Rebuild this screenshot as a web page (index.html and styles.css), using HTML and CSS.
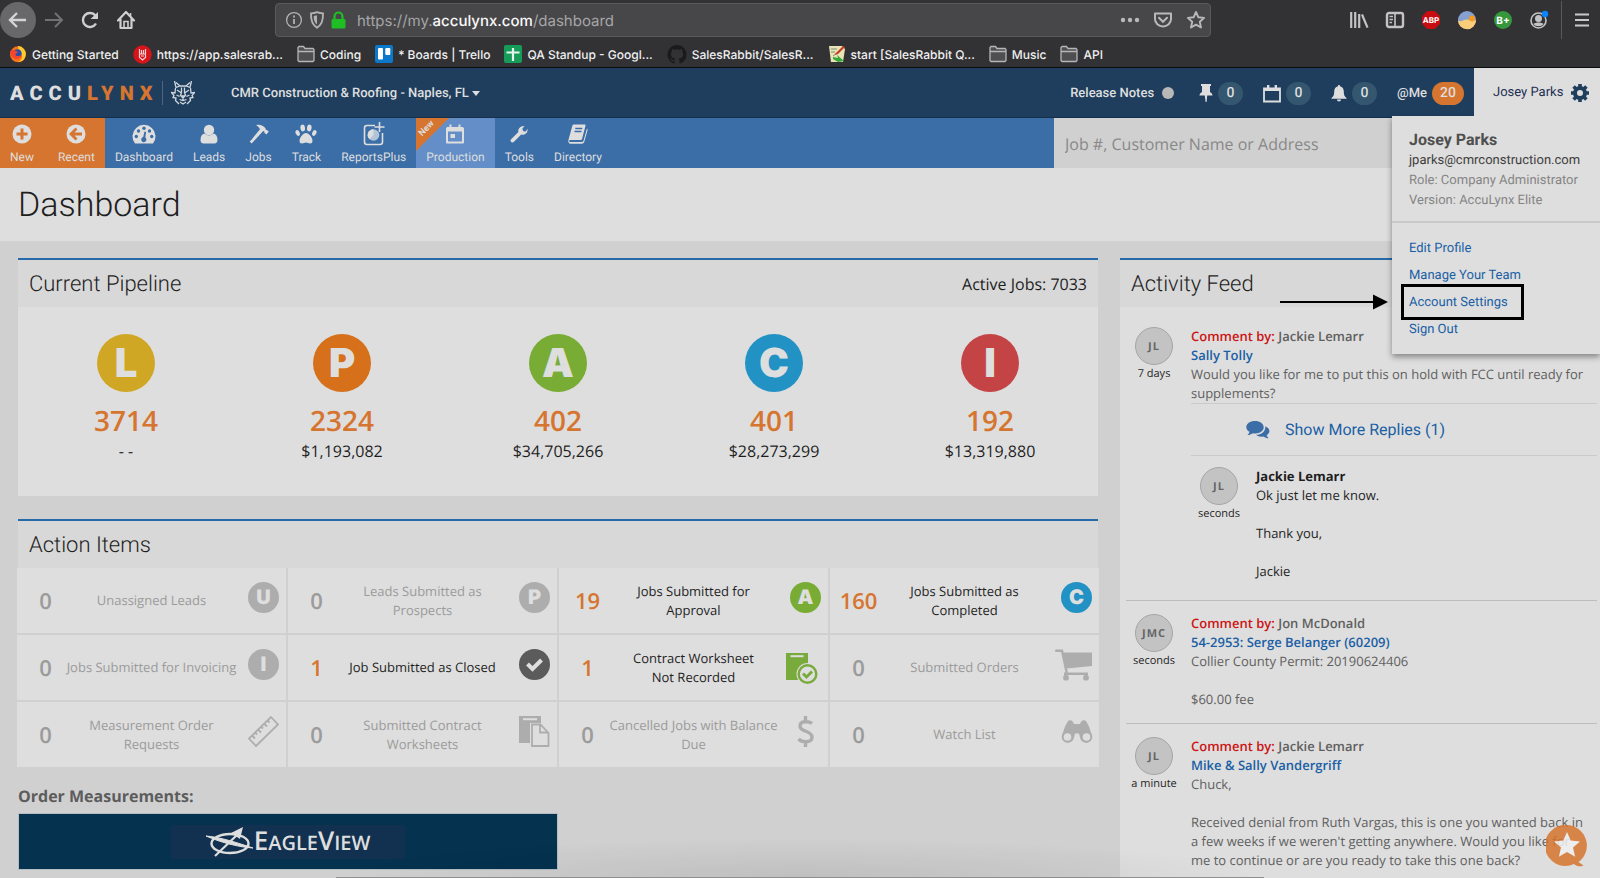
FILE: index.html
```html
<!DOCTYPE html>
<html lang="en">
<head>
    <meta charset="UTF-8">
    <meta name="viewport" content="width=device-width, initial-scale=1.0">
    <title>AccuLynx - Dashboard</title>
    <link rel="stylesheet" href="styles.css">
</head>
<body>
    <!-- Browser bars -->
    <header class="browser">
        <div class="toolbar">
            <div class="tool-nav">
                <button class="back" aria-label="Back"><svg width="20" height="18" viewBox="0 0 20 18"><path d="M18 9H3M9 2L2 9l7 7" fill="none" stroke="#d4d4d6" stroke-width="2.4"/></svg></button>
                <button aria-label="Forward"><svg width="20" height="18" viewBox="0 0 20 18"><path d="M1 9h16M11 2l7 7-7 7" fill="none" stroke="#727275" stroke-width="2"/></svg></button>
                <button aria-label="Reload"><svg width="20" height="18" viewBox="0 0 20 18"><path d="M16 12.5A7 7 0 1 1 15.4 4.6" fill="none" stroke="#cfcfd1" stroke-width="2.4"/><path d="M18 1v7h-7.5z" fill="#cfcfd1"/></svg></button>
                <button aria-label="Home"><svg width="20" height="20" viewBox="0 0 20 20"><path d="M2 10.5L10 2l8 8.500M4.500 9v9h11V9" fill="none" stroke="#cfcfd1" stroke-width="2.200" stroke-linejoin="round" stroke-linecap="round"/><path d="M8 18v-6.500h4V18M14.500 3v3" fill="none" stroke="#cfcfd1" stroke-width="1.600"/></svg></button>
            </div>
            <div class="urlbar">
                <svg width="18" height="18" viewBox="0 0 18 18"><circle cx="9" cy="9" r="7.400" fill="none" stroke="#b1b1b3" stroke-width="1.300"/><path d="M9 8v5M9 4.600v1.800" stroke="#b1b1b3" stroke-width="1.800"/></svg>
                <svg width="16" height="18" viewBox="0 0 16 18"><path d="M8 1.200c2 .9 4 1.200 6 1.200C14.300 9 12.500 14 8 16.600 3.500 14 1.700 9 2 2.400c2 0 4-.3 6-1.200z" fill="none" stroke="#b1b1b3" stroke-width="1.900"/><path d="M8 4.200v9.400C5.600 11.800 4.600 9 4.600 5z" fill="#b1b1b3"/></svg>
                <svg class="lock" width="15" height="18" viewBox="0 0 15 18"><path d="M3.500 8V5.500a4 4 0 0 1 8 0V8" fill="none" stroke="#1fbe24" stroke-width="2.200"/><rect x=".5" y="8" width="14" height="9.500" rx="1.500" fill="#1fbe24"/></svg>
                <span class="url">https://my.<b>acculynx.com</b>/dashboard</span>
                <svg width="20" height="18" viewBox="0 0 20 18" fill="#b9b9bb"><circle cx="3" cy="9" r="2.200"/><circle cx="10" cy="9" r="2.200"/><circle cx="17" cy="9" r="2.200"/></svg>
                <svg width="20" height="18" viewBox="0 0 20 18"><path d="M2 2.500h16V8a8 7.500 0 0 1-16 0z" fill="none" stroke="#b9b9bb" stroke-width="2" stroke-linejoin="round"/><path d="M6 6.800l4 4 4-4" fill="none" stroke="#b9b9bb" stroke-width="2" stroke-linecap="round"/></svg>
                <svg width="20" height="20" viewBox="0 0 20 20"><path d="M10 2l2.400 5.300 5.700.6-4.300 3.900 1.200 5.700-5-2.900-5 2.900 1.200-5.700L1.900 7.900l5.700-.6z" fill="none" stroke="#b9b9bb" stroke-width="1.900" stroke-linejoin="round"/></svg>
            </div>
            <div class="tool-ext">
                <button aria-label="Library"><svg width="20" height="18" viewBox="0 0 20 18" stroke="#c3c3c5" stroke-width="2.200"><path d="M2.200 1v16M6.200 1v16M10.200 3v14M13 3.500l5.500 13.200"/></svg></button>
                <button aria-label="Sidebars"><svg width="20" height="18" viewBox="0 0 20 18"><rect x="2" y="2" width="16" height="14" rx="2" fill="none" stroke="#c3c3c5" stroke-width="2.400"/><path d="M10 2v14M4.500 5.500H8M4.500 8.500H8M4.500 11.500H7" stroke="#c3c3c5" stroke-width="1.600"/></svg></button>
                <button aria-label="Adblock Plus"><svg width="20" height="20" viewBox="0 0 20 20"><path d="M6.200 1h7.600L19 6.200v7.600L13.800 19H6.200L1 13.800V6.200z" fill="#c70d12"/><text class="abp" x="10" y="13" text-anchor="middle">ABP</text></svg></button>
                <button aria-label="Weather"><svg width="20" height="20" viewBox="0 0 20 20"><circle cx="10" cy="10" r="9" fill="#86a0cf"/><path d="M1 10.500c4 2.400 6-2 10-.8 3 .8 5 1.300 8 .3a9 9 0 0 1-18 .5z" fill="#fbce79"/><circle cx="15" cy="8.500" r="3" fill="#f79a20"/></svg></button>
                <button aria-label="B+"><svg width="20" height="20" viewBox="0 0 20 20"><circle cx="10" cy="10" r="9" fill="#36973c"/><text class="bplus" x="10" y="13.500" text-anchor="middle">B+</text></svg></button>
                <button aria-label="Account"><svg width="20" height="20" viewBox="0 0 20 20"><circle cx="9.500" cy="10.500" r="7.500" fill="none" stroke="#c3c3c5" stroke-width="1.600"/><circle cx="9.500" cy="8.500" r="3.500" fill="#c3c3c5"/><path d="M4.500 14c2-2 8-2 10 0-2 3-8 3-10 0z" fill="#c3c3c5"/><circle cx="16" cy="4" r="3.200" fill="#0a84ff"/></svg></button>
                <button class="menu" aria-label="Menu"><svg width="16" height="16" viewBox="0 0 16 16"><path d="M1 2.500h14M1 8h14M1 13.500h14" stroke="#c9c9cb" stroke-width="2.200"/></svg></button>
            </div>
        </div>
        <nav class="bookmarks">
            <a href="#"><svg width="18" height="18" viewBox="0 0 18 18"><circle cx="9" cy="9.300" r="8" fill="#f9701b"/><path d="M9 1a8 8 0 0 1 7.500 10A8 8 0 0 1 9 17c4-2 5-5 3-9-1-2-3-3-3-7z" fill="#ffcb2e"/><circle cx="8.500" cy="8.500" r="4.200" fill="#2b4fa8"/><path d="M1.300 6C3 4 5 4.500 6.500 6c2 0 3 1 1.500 2-2 .5-2 2.500 0 3 2 .4 3-.5 4.500-.5-1 3-5 4.500-8 2.500C2 11 1 9 1.300 6z" fill="#f5452c"/></svg>Getting Started</a>
            <a href="#"><svg width="19" height="19" viewBox="0 0 19 19"><circle cx="9.500" cy="9.500" r="9.200" fill="#d8141b"/><path d="M6.500 4v5M12.500 4v5M8.500 5v4M10.500 5v4M6.500 9v3.500l3 2.500 3-2.500V9zM8 11h3" fill="none" stroke="#f3d3d3" stroke-width="1.200"/></svg>https://app.salesrab...</a>
            <a href="#"><svg width="18" height="18" viewBox="0 0 18 18"><path d="M1 15.500V2.500l1-1h4.500l1.500 2h8l1 1v11l-1 1H2zM1 6.500h16" fill="#4f4f51" stroke="#b6b6b8" stroke-width="1.300"/></svg>Coding</a>
            <a href="#"><svg width="18" height="18" viewBox="0 0 18 18"><rect width="18" height="18" rx="2" fill="#0b78cc"/><rect x="3" y="3" width="5" height="11.500" rx="1" fill="#fff"/><rect x="10.300" y="3" width="5" height="7" rx="1" fill="#fff"/></svg>* Boards | Trello</a>
            <a href="#"><svg width="18" height="18" viewBox="0 0 18 18"><rect width="18" height="18" rx="2" fill="#159c58"/><path d="M9 3v13M2.500 7.500h13" stroke="#e6f4ec" stroke-width="2.200"/></svg>QA Standup - Googl...</a>
            <a href="#"><svg width="20" height="19" viewBox="0 0 16 16"><path fill="#1b1b1d" d="M8 0C3.580 0 0 3.580 0 8c0 3.540 2.290 6.530 5.470 7.590.4.070.55-.17.55-.38 0-.19-.01-.82-.01-1.490-2.010.37-2.530-.49-2.690-.94-.09-.23-.48-.94-.82-1.130-.28-.15-.68-.52-.01-.53.63-.01 1.080.58 1.230.82.72 1.210 1.870.87 2.330.66.070-.52.280-.87.510-1.070-1.780-.2-3.640-.89-3.640-3.950 0-.87.310-1.590.82-2.150-.08-.2-.36-1.020.08-2.120 0 0 .67-.21 2.200.82.640-.18 1.320-.27 2-.27s1.360.09 2 .27c1.530-1.040 2.200-.82 2.200-.82.440 1.100.16 1.920.08 2.120.51.560.82 1.270.82 2.150 0 3.070-1.870 3.750-3.650 3.950.29.250.54.730.54 1.480 0 1.070-.01 1.930-.01 2.200 0 .21.150.46.550.38A8 8 0 0 0 16 8c0-4.420-3.580-8-8-8z"/></svg>SalesRabbit/SalesR...</a>
            <a href="#"><svg width="18" height="18" viewBox="0 0 18 18"><path d="M1 1h13l3 3-2 13H3z" fill="#e9e3b8"/><path d="M3 4h6M3 7h4M5 11l4-3" stroke="#7d8f76"/><path d="M5 12l5 1-1-3 7 6-6 1-5-3z" fill="#35a838"/><path d="M7 9l8-8 2 1-7 7-3 1z" fill="#c93a24"/></svg>start [SalesRabbit Q...</a>
            <a href="#"><svg width="18" height="18" viewBox="0 0 18 18"><path d="M1 15.500V2.500l1-1h4.500l1.500 2h8l1 1v11l-1 1H2zM1 6.500h16" fill="#4f4f51" stroke="#b6b6b8" stroke-width="1.300"/></svg>Music</a>
            <a href="#"><svg width="18" height="18" viewBox="0 0 18 18"><path d="M1 15.500V2.500l1-1h4.500l1.500 2h8l1 1v11l-1 1H2zM1 6.500h16" fill="#4f4f51" stroke="#b6b6b8" stroke-width="1.300"/></svg>API</a>
        </nav>
    </header>

    <!-- App header -->
    <div class="topbar">
        <a class="logo" href="#">
            <span class="wordmark">ACCU<span>LYNX</span></span>
            <svg width="24" height="24" viewBox="0 0 24 24" fill="none" stroke="#d0d6dc" stroke-width="1.300"><path d="M3.500 0l1.500 6.500 4-1.500h6l4 1.500L20.500 0M5 1.500L9 5M19 1.500L15 5M4.500 7L4 12l-3.500-.5L3 14.500l-1 2 3 .5-.5 2.500L8 23M19.500 7l.5 5 3.500-.5L21 14.500l1 2-3 .5.5 2.500L16 23M6 9l4.500 3M18 9l-4.500 3M10.500 6.500v5l-1 3M13.500 6.500v5l1 3M10 15h4l-2 2zM12 17v2M8.500 18.500l3.500 1 3.500-1M9 21l3 2 3-2M5.500 14l3 1.500M18.500 14l-3 1.500"/></svg>
        </a>
        <button class="company">CMR Construction &amp; Roofing - Naples, FL<i class="caret"></i></button>
        <div class="status">
            <a class="release" href="#">Release Notes<i class="dot"></i></a>
            <a href="#" aria-label="Pinned"><svg width="14" height="20" viewBox="0 0 14 20" fill="#dedede"><path d="M2 1h10v2h-1v6c1.500.8 2.500 2 2.500 3.500h-5.300L7.600 19h-1L5.800 12.500H.5C.5 11 1.500 9.800 3 9V3H2z"/></svg><span class="badge">0</span></a>
            <a href="#" aria-label="Calendar"><svg width="18" height="19" viewBox="0 0 18 19"><path d="M1 4.500h16v13H1z" fill="none" stroke="#dedede" stroke-width="1.800"/><path d="M1 4h16v3H1zM4 1h2.400v4H4zM11.600 1H14v4h-2.400z" fill="#dedede"/></svg><span class="badge">0</span></a>
            <a href="#" aria-label="Alerts"><svg width="16" height="18" viewBox="0 0 16 18" fill="#dedede"><path d="M8 1c.8 0 1 .5 1 1.200 2.500.7 3.800 2.500 3.800 5.300 0 3.500.6 4.800 2.700 6.500v.8H.5V14C2.600 12.300 3.200 11 3.200 7.500 3.200 4.700 4.500 2.900 7 2.200 7 1.500 7.200 1 8 1zM6 15.500h4c0 1.200-.8 2-2 2s-2-.8-2-2z"/></svg><span class="badge">0</span></a>
            <a href="#">@Me<span class="badge hot">20</span></a>
        </div>
        <div class="user">
            <button class="user-button">Josey Parks
                <svg width="18" height="18" viewBox="0 0 18 18"><circle cx="9" cy="9" r="5" fill="none" stroke="#1f3e5e" stroke-width="4"/><path d="M9 0v4M9 14v4M0 9h4M14 9h4M2.600 2.600l3 3M12.400 12.400l3 3M2.600 15.400l3-3M12.400 5.600l3-3" stroke="#1f3e5e" stroke-width="3.600"/></svg>
            </button>
            <div class="user-menu">
                <div class="user-info">
                    <strong>Josey Parks</strong>
                    <span class="email">jparks@cmrconstruction.com</span>
                    <span>Role: Company Administrator</span>
                    <span>Version: AccuLynx Elite</span>
                </div>
                <div class="user-links">
                    <a href="#">Edit Profile</a>
                    <a href="#">Manage Your Team</a>
                    <a class="marked" href="#">Account Settings<svg class="arrow" width="108" height="16" viewBox="0 0 108 16"><path d="M0 8h96" stroke="#000" stroke-width="2"/><path d="M93 .5L108 8l-15 7.500z"/></svg></a>
                    <a href="#">Sign Out</a>
                </div>
            </div>
        </div>
    </div>

    <div class="mainnav">
        <nav class="items">
            <div class="quick">
                <a href="#"><svg width="20" height="20" viewBox="0 0 20 20"><circle cx="10" cy="10" r="9.500" fill="#dedede"/><path d="M10 4.500v11M4.500 10h11" stroke="#d6752f" stroke-width="3"/></svg>New</a>
                <a href="#"><svg width="20" height="20" viewBox="0 0 20 20"><circle cx="10" cy="10" r="9.500" fill="#dedede"/><path d="M16 10H6M10.500 4.500L5 10l5.500 5.500" fill="none" stroke="#d6752f" stroke-width="2.800"/></svg>Recent</a>
            </div>
            <a href="#"><svg width="24" height="20" viewBox="0 0 24 20"><path d="M3 19.500A11.500 11.500 0 1 1 21 19.500z" fill="#dedede"/><g fill="#3b6da6"><circle cx="4.300" cy="12.500" r="1.700"/><circle cx="6.500" cy="7" r="1.700"/><circle cx="12" cy="4.200" r="1.700"/><circle cx="17.500" cy="7" r="1.700"/><circle cx="19.700" cy="12.500" r="1.700"/><path d="M12.500 7.500l1.600.4-.8 5.600a2.600 2.600 0 1 1-2.100-.4z"/></g></svg>Dashboard</a>
            <a href="#"><svg width="18" height="20" viewBox="0 0 18 20" fill="#dedede"><circle cx="9" cy="6" r="5.200"/><path d="M4.500 9.500c3 2.600 6 2.600 9 0 2.500.4 4 3 4 6.500 0 2-1.200 3.500-3 3.500h-11c-1.800 0-3-1.500-3-3.500 0-3.500 1.500-6.100 4-6.500z"/></svg>Leads</a>
            <a href="#"><svg width="20" height="20" viewBox="0 0 20 20" fill="#dedede"><path d="M7 1c4-1 7 .2 9.500 3.200l.2 1.600 1.300.2 1.800 1.800-2.600 2.700-1.900-1.900.1-1.100-1.200-.6L4.500 17.500 2.600 19.500.7 17.600l2-2.200L11 5.200C10 3.500 9 2.200 7 1z"/></svg>Jobs</a>
            <a href="#"><svg width="22" height="20" viewBox="0 0 22 20" fill="#dedede"><ellipse cx="7.700" cy="4" rx="2.300" ry="3.400" transform="rotate(-8 7.700 4)"/><ellipse cx="14.300" cy="4" rx="2.300" ry="3.400" transform="rotate(8 14.300 4)"/><ellipse cx="2.700" cy="9" rx="2" ry="3" transform="rotate(-25 2.700 9)"/><ellipse cx="19.300" cy="9" rx="2" ry="3" transform="rotate(25 19.300 9)"/><path d="M11 9c3 0 6.500 4.700 6.500 8 0 1.700-1 2.500-2.500 2.500-1.700 0-2.600-1-4-1s-2.300 1-4 1c-1.500 0-2.500-.8-2.500-2.500C4.500 13.700 8 9 11 9z"/></svg>Track</a>
            <a href="#"><svg class="reports" width="22" height="24" viewBox="0 0 22 24"><path d="M12 3.500H4A2.500 2.500 0 0 0 1.500 6v14A2.500 2.500 0 0 0 4 22.500h13a2.500 2.500 0 0 0 2.500-2.500v-9" fill="none" stroke="#dedede" stroke-width="1.600"/><circle cx="10.500" cy="13" r="5.800" fill="#b3c3da"/><path d="M10.500 13V7.200a5.800 5.800 0 0 0-4 10z" fill="#dedede"/><path d="M16.500 0v10M11.500 5h10" stroke="#dedede" stroke-width="1.600"/></svg>ReportsPlus</a>
            <a class="production" href="#"><span class="ribbon">New</span><svg width="18" height="20" viewBox="0 0 18 20"><path d="M1 4.500h16v14H1z" fill="none" stroke="#dedede" stroke-width="2" stroke-linejoin="round"/><path d="M1 3h16v4.500H1zM3.500.5h2V4h-2zM12.500.5h2V4h-2zM4.500 10h4.500v4H4.500z" fill="#dedede"/></svg>Production</a>
            <a href="#"><svg width="18" height="20" viewBox="0 0 18 20"><path d="M12.500 2.200a4.600 4.600 0 0 1 2-.2l-2.200 2.800 1 2.400 2.500.3 1.700-2.800c.6 2.800-1 5.700-4 6-.9.100-1.600 0-2.300-.3L4 17.800a1.900 1.900 0 0 1-2.900-2.600L8.400 8C7.600 5.300 9.500 2.800 12.500 2.200z" fill="#dedede"/></svg>Tools</a>
            <a href="#"><svg width="20" height="20" viewBox="0 0 20 20"><path d="M6 .5h10.500c.8 0 1.200.5 1 1.200L14 15c-.2.600-.6 1-1.300 1H2.500C.8 16 .5 17.500 2 18h11.500c1 0 1.700-.4 2-1.300L19 4.500c.6.400.8 1 .6 1.600L16.300 17.700c-.4 1.300-1.300 2-2.600 2H2.500C.7 19.700 0 18 .4 16L4.300 2C4.500 1 5 .5 6 .5z" fill="#dedede"/><path d="M7.300 4.500h7M6.500 7.500h7" stroke="#3b6da6" stroke-width="1.300"/></svg>Directory</a>
        </nav>
        <input class="search" type="search" aria-label="Search jobs" placeholder="Job #, Customer Name or Address">
    </div>

    <div class="page-head"><h1>Dashboard</h1></div>

    <main class="content">
        <div class="left">
            <section class="panel">
                <div class="panel-head"><h2>Current Pipeline</h2><span>Active Jobs: 7033</span></div>
                <div class="pipeline">
                    <a class="stage" href="#"><i class="circle lead">L</i><b>3714</b><span>- -</span></a>
                    <a class="stage" href="#"><i class="circle prospect">P</i><b>2324</b><span>$1,193,082</span></a>
                    <a class="stage" href="#"><i class="circle approved">A</i><b>402</b><span>$34,705,266</span></a>
                    <a class="stage" href="#"><i class="circle completed">C</i><b>401</b><span>$28,273,299</span></a>
                    <a class="stage" href="#"><i class="circle invoiced">I</i><b>192</b><span>$13,319,880</span></a>
                </div>
            </section>

            <section class="panel">
                <div class="panel-head"><h2>Action Items</h2></div>
                <div class="tiles">
                    <a class="tile" href="#"><b>0</b><span>Unassigned Leads</span><i class="circle small">U</i></a>
                    <a class="tile" href="#"><b>0</b><span>Leads Submitted as<br>Prospects</span><i class="circle small">P</i></a>
                    <a class="tile active" href="#"><b>19</b><span>Jobs Submitted for<br>Approval</span><i class="circle small approved">A</i></a>
                    <a class="tile active" href="#"><b>160</b><span>Jobs Submitted as<br>Completed</span><i class="circle small completed">C</i></a>
                    <a class="tile" href="#"><b>0</b><span>Jobs Submitted for Invoicing</span><i class="circle small">I</i></a>
                    <a class="tile active" href="#"><b>1</b><span>Job Submitted as Closed</span><svg width="31" height="31" viewBox="0 0 31 31"><circle cx="15.500" cy="15.500" r="15.500" fill="#5b5b5b"/><path d="M8.500 15l5 5 9-9" fill="none" stroke="#dedede" stroke-width="4"/></svg></a>
                    <a class="tile active" href="#"><b>1</b><span>Contract Worksheet<br>Not Recorded</span><svg class="worksheet" width="32" height="31" viewBox="0 0 32 31"><path d="M0 0h22v27H0z" fill="#79aa3c"/><path d="M4.500 3.200h13" stroke="#dedede" stroke-width="2"/><circle cx="21.500" cy="21" r="11" fill="#dedede"/><circle cx="21.500" cy="21" r="8.800" fill="none" stroke="#79aa3c" stroke-width="2.400"/><path d="M17 20.500l3.500 3.500 5.500-5.500" fill="none" stroke="#79aa3c" stroke-width="3"/></svg></a>
                    <a class="tile" href="#"><b>0</b><span>Submitted Orders</span><svg class="cart" width="37" height="32" viewBox="0 0 37 32" fill="#adadad"><path d="M1.200 1.700H7L12 25" fill="none" stroke="#adadad" stroke-width="2.400" stroke-linecap="round"/><path d="M7.500 3.500H37V17L11.500 19.500zM9 23.500h24v2.400H9z"/><circle cx="11" cy="28.700" r="2.900"/><circle cx="31" cy="28.700" r="2.900"/></svg></a>
                    <a class="tile" href="#"><b>0</b><span>Measurement Order<br>Requests</span><svg width="31" height="31" viewBox="0 0 31 31" fill="none" stroke="#adadad" stroke-width="1.800"><path d="M23 1l7 7.500L8 30 1 22.500zM4 19.500l3 3M7 16.500l2 2M10 13.500l3 3M13 10.500l2 2M16 7.500l3 3M19.500 4.500l2 2"/></svg></a>
                    <a class="tile" href="#"><b>0</b><span>Submitted Contract<br>Worksheets</span><svg width="31" height="31" viewBox="0 0 31 31"><path d="M0 0h22v27H0z" fill="#adadad"/><path d="M4 3.200h14" stroke="#dedede" stroke-width="2"/><path d="M11 7h12l8 9v15H11z" fill="#dedede"/><path d="M13 8.500h8.500l8 8.500v13H13zM21 8.500v8h8" fill="none" stroke="#adadad" stroke-width="1.800"/></svg></a>
                    <a class="tile" href="#"><b>0</b><span>Cancelled Jobs with Balance<br>Due</span><svg width="17" height="31" viewBox="0 0 17 31"><path d="M15 7.500C12 5 3 4.500 3 10c0 6.500 12 4 12 11 0 6-9.500 6-13.500 2M8.500 0v5.500M8.500 25.500V31" fill="none" stroke="#adadad" stroke-width="3.400"/></svg></a>
                    <a class="tile" href="#"><b>0</b><span>Watch List</span><svg width="32" height="31" viewBox="0 0 32 31"><path d="M7 5c1.500-1.500 4-1 5 1l1 2h6l1-2c1-2 3.500-2.500 5-1l3 5.500 3 9a6 6 0 0 1-12 2l-1-4h-4l-1 4a6 6 0 0 1-12-2l3-9z" fill="#adadad"/><circle cx="6.500" cy="21" r="4.800" fill="#dedede" stroke="#adadad" stroke-width="2"/><circle cx="25.500" cy="21" r="4.800" fill="#dedede" stroke="#adadad" stroke-width="2"/></svg></a>
                </div>
            </section>

            <h3>Order Measurements:</h3>
            <a class="eagleview" href="#">
                <span class="ev-logo">
                    <svg width="48" height="30" viewBox="0 0 48 30" fill="none" stroke="#dedede"><ellipse cx="24" cy="16.500" rx="18.500" ry="9.500" stroke-width="2.400"/><path d="M0 9c14 1 32 7 47 12-16-1-33-6-47-12z" fill="#dedede" stroke-width="1"/><path d="M9 29L31 8" stroke-width="2.200"/><path d="M25 6L37 0l-3 12z" fill="#dedede" stroke="none"/></svg>
                    <span class="ev-name"><b>E</b>AGLE<b>V</b>IEW</span>
                </span>
            </a>
        </div>

        <section class="panel feed">
            <div class="panel-head"><h2>Activity Feed</h2></div>
            <article class="entry first">
                <div class="who"><i class="avatar">JL</i>7 days</div>
                <div class="text">
                    <h4><em>Comment by:</em> Jackie Lemarr</h4>
                    <a class="job" href="#">Sally Tolly</a>
                    <p>Would you like for me to put this on hold with FCC until ready for supplements?</p>
                    <button class="more"><svg width="24" height="19" viewBox="0 0 24 19" fill="#3b6da6"><path d="M9 1c5 0 8.700 2.700 8.700 6.200S14 13.400 9 13.400c-.8 0-1.500-.1-2.200-.2C5.300 14.400 3.500 15 1.500 15c1-1 1.800-2 2-3.200C1.500 10.700.3 9 .3 7.200.3 3.700 4 1 9 1z"/><path d="M19.300 6.200c2.400 1 4.100 2.700 4.100 4.900 0 1.700-1 3.200-2.700 4.200.2 1.100 1 2 2 3-2 0-3.700-.7-5.200-1.800-3 .5-5.700-.1-7.500-1.700 5.500-.2 9.800-3.500 9.300-8.600z"/></svg>Show More Replies (1)</button>
                    <div class="reply">
                        <div class="who"><i class="avatar">JL</i>seconds</div>
                        <div class="text">
                            <h4>Jackie Lemarr</h4>
                            <p>Ok just let me know.<br><br>Thank you,<br><br>Jackie</p>
                        </div>
                    </div>
                </div>
            </article>
            <article class="entry">
                <div class="who"><i class="avatar">JMC</i>seconds</div>
                <div class="text">
                    <h4><em>Comment by:</em> Jon McDonald</h4>
                    <a class="job" href="#">54-2953: Serge Belanger (60209)</a>
                    <p>Collier County Permit: 20190624406<br><br>$60.00 fee</p>
                </div>
            </article>
            <article class="entry">
                <div class="who"><i class="avatar">JL</i>a minute</div>
                <div class="text">
                    <h4><em>Comment by:</em> Jackie Lemarr</h4>
                    <a class="job" href="#">Mike &amp; Sally Vandergriff</a>
                    <p>Chuck,<br><br>Received denial from Ruth Vargas, this is one you wanted back in a few weeks if we weren't getting anywhere. Would you like for me to continue or are you ready to take this one back?</p>
                </div>
            </article>
        </section>
    </main>

    <button class="chat" aria-label="Feedback"><svg width="42" height="43" viewBox="0 0 42 43"><path d="M21 1a20.500 20.500 0 0 1 11.500 37l5 3.500c-3 1.500-7 1-9.500-1.500A20.500 20.500 0 1 1 21 1z" fill="#d6752f"/><path d="M21 8l3.700 8.600 9.300.8-7 6.200 2.100 9.200-8.100-4.900-8.100 4.900 2.100-9.200-7-6.200 9.300-.8z" fill="#f0f0f0"/></svg></button>
    <div class="bottom-shade"></div>
</body>
</html>
```
FILE: styles.css
```css
*, *::before {
    box-sizing: border-box;
}
body {
    margin: 0;
    height: 100vh;
    display: flex;
    flex-direction: column;
    overflow: hidden;
    background: #d0d0d0;
    font-family: "Open Sans", "Noto Sans", sans-serif;
    font-size: 13px;
    line-height: 19px;
    text-rendering: geometricPrecision;
    color: #1e1e1e;
}
a {
    color: inherit;
    text-decoration: none;
}
button {
    padding: 0;
    border: 0;
    background: none;
    font: inherit;
    text-rendering: inherit;
    color: inherit;
    cursor: pointer;
}
i {
    font-style: normal;
}
svg {
    display: block;
    flex: none;
}
h1, h2, h3, h4, p {
    margin: 0;
}

/* Browser bars */
.browser {
    flex: none;
    background: #323234;
    border-bottom: 1px solid #0c0c0d;
    font-family: Inter, "Liberation Sans", sans-serif;
}
.toolbar {
    display: flex;
    align-items: center;
    height: 40px;
    padding-right: 10px;
}
.tool-nav, .tool-ext {
    display: flex;
    align-items: center;
    gap: 16px;
}
.tool-nav {
    width: 275px;
}
.tool-nav .back {
    display: flex;
    justify-content: center;
    align-items: center;
    width: 36px;
    height: 36px;
    margin-right: -8px;
    border-radius: 50%;
    background: #68686a;
}
.urlbar {
    flex: 1;
    display: flex;
    align-items: center;
    gap: 13px;
    height: 34px;
    padding: 0 4px 0 9px;
    border: 1px solid #5a5a5c;
    border-radius: 4px;
    background: #474749;
}
.urlbar svg + svg {
    margin-left: -7px;
}
.urlbar .url ~ svg {
    margin-left: 0;
}
.url {
    flex: 1;
    margin-left: -2px;
    font-size: 15px;
    color: #a5a5a7;
}
.url b {
    font-weight: 500;
    color: #f9f9fa;
}
.tool-ext {
    padding-left: 138px;
}
.tool-ext .menu {
    display: flex;
    align-items: center;
    height: 38px;
    padding-left: 12px;
    border-left: 1px solid #5a5a5c;
    margin-left: -4px;
}
.abp {
    font: bold 8px Inter, sans-serif;
    fill: #fff;
}
.bplus {
    font: bold 10px Inter, sans-serif;
    fill: #fff;
}
.bookmarks {
    display: flex;
    align-items: center;
    gap: 14px;
    height: 27px;
    padding: 1px 0 0 9px;
    font-size: 12px;
    font-weight: 500;
    color: #f0f0f1;
}
.bookmarks a {
    display: flex;
    align-items: center;
    gap: 5px;
}

/* Top bar */
.topbar {
    flex: none;
    display: flex;
    align-items: center;
    height: 50px;
    background: #1f3e5e;
    border-bottom: 1px solid #16304c;
    font-family: Roboto, sans-serif;
    font-weight: 500;
    color: #dedede;
}
.logo {
    display: flex;
    align-items: center;
    width: 231px;
    padding-left: 10px;
}
.wordmark {
    padding-right: 3px;
    margin-right: 8px;
    border-right: 1px solid #4f6780;
    font-size: 20px;
    font-weight: 900;
    line-height: 24px;
    letter-spacing: 6px;
}
.wordmark span {
    color: #d6752f;
}
.company {
    display: flex;
    align-items: center;
    gap: 3px;
    padding-top: 2px;
}
.caret {
    border: 4px solid transparent;
    border-top: 5px solid #dedede;
    border-bottom: 0;
}
.status {
    flex: 1;
    display: flex;
    justify-content: flex-end;
    align-items: center;
    gap: 20px;
    padding: 1px 10px 0 0;
}
.status a {
    display: flex;
    align-items: center;
    gap: 5px;
}
.status .release {
    gap: 8px;
    margin-right: 5px;
}
.dot {
    width: 12px;
    height: 12px;
    border-radius: 50%;
    background: #b8b8b8;
}
.badge {
    min-width: 25px;
    padding: 0 8px;
    border-radius: 12px;
    background: #34566f;
    font-size: 14px;
    line-height: 23px;
    text-align: center;
}
.badge.hot {
    background: #d6752f;
}
.user {
    position: relative;
    align-self: stretch;
}
.user-button {
    position: relative;
    z-index: 3;
    display: flex;
    align-items: center;
    gap: 8px;
    width: 126px;
    height: 49px;
    padding-left: 19px;
    background: #dedede;
    font-weight: 400;
    color: #1c2f52;
}
.user-menu {
    position: absolute;
    top: 48px;
    right: 0;
    z-index: 2;
    width: 208px;
    background: #dedede;
    box-shadow: 0 3px 6px rgba(0, 0, 0, 0.4);
    font-weight: 400;
    line-height: 20px;
    color: #858585;
}
.user-info {
    display: flex;
    flex-direction: column;
    padding: 14px 0 10px 17px;
    border-bottom: 2px solid #c9c9c9;
}
.user-info strong {
    margin-bottom: 1px;
    font-size: 16px;
    color: #4f4f4f;
}
.user-info .email {
    color: #3d3d3d;
}
.user-links {
    display: flex;
    flex-direction: column;
    padding: 12px 0 11px 17px;
    line-height: 27px;
    color: #1a5fa5;
}
.marked {
    position: relative;
}
/* Frame drawn round the marked link */
.marked::before {
    content: "";
    position: absolute;
    left: -8px;
    top: -5px;
    width: 123px;
    height: 36px;
    border: 3px solid #000;
}
.arrow {
    position: absolute;
    right: 212px;
    top: 5px;
}

/* Blue navigation */
.mainnav {
    flex: none;
    display: flex;
    height: 50px;
    background: #3b6da6;
    font-family: Roboto, sans-serif;
    font-size: 12px;
    color: #dedede;
}
.items {
    flex: 1;
    display: flex;
}
.items a {
    display: flex;
    flex-direction: column;
    align-items: center;
    gap: 6px;
    padding: 6px 10px 0;
    line-height: 14px;
}
.quick {
    display: flex;
    gap: 4px;
    background: #d6752f;
}
.reports {
    margin: -2px 0;
}
.items .production {
    position: relative;
    overflow: hidden;
    background: #648ec7;
}
/* Corner ribbon, a strip laid across the corner */
.ribbon {
    position: absolute;
    left: -22px;
    top: -4px;
    width: 60px;
    height: 24px;
    background: #d6752f;
    font-size: 9px;
    font-weight: 700;
    line-height: 32px;
    text-align: center;
    transform: rotate(-45deg);
}
.search {
    width: 546px;
    padding: 1px 11px 0;
    border: 0;
    border-radius: 0;
    background: #d0d0d0;
    font-family: "Open Sans", "Noto Sans", sans-serif;
    font-size: 16px;
    text-rendering: inherit;
}
.search::placeholder {
    color: #888;
}

.page-head {
    flex: none;
    height: 73px;
    padding: 16px 18px;
    background: #dedede;
}
h1 {
    font-family: Roboto, sans-serif;
    font-size: 34px;
    font-weight: 300;
    line-height: 42px;
}

/* Dashboard */
.content {
    flex: 1;
    min-height: 0;
    display: grid;
    grid-template-columns: 9fr 4fr;
    gap: 22px;
    padding: 17px 0 0 18px;
}
.left {
    min-width: 0;
}
.panel {
    border-top: 2px solid #276aa9;
    background: #dedede;
}
.panel-head {
    display: flex;
    justify-content: space-between;
    align-items: center;
    height: 47px;
    padding: 1px 11px 0;
    background: #d8d8d8;
    font-size: 16px;
}
h2 {
    font-family: Roboto, sans-serif;
    font-size: 22px;
    font-weight: 300;
}
.pipeline {
    display: grid;
    grid-template-columns: repeat(5, 1fr);
    margin-bottom: 23px;
    padding: 27px 0 33px;
}
.stage {
    display: flex;
    flex-direction: column;
    align-items: center;
    font-size: 16px;
    line-height: 24px;
}
.stage b {
    margin-top: 11px;
    font-size: 28px;
    font-weight: 600;
    line-height: 36px;
    color: #d6752f;
}
.circle {
    width: 58px;
    border-radius: 50%;
    font-family: Inter, sans-serif;
    font-size: 40px;
    font-weight: 900;
    line-height: 58px;
    text-align: center;
    color: #dedede;
    background: #adadad;
}
.circle.small {
    width: 31px;
    font-size: 20px;
    line-height: 31px;
}
.circle.lead {
    background: #d0a724;
}
.circle.prospect {
    background: #d6701a;
}
.circle.approved {
    background: #79ac34;
}
.circle.completed {
    background: #2292c5;
}
.circle.invoiced {
    background: #c44345;
}
.tiles {
    display: grid;
    grid-template-columns: repeat(4, minmax(0, 1fr));
    gap: 2px;
    margin: 0 -1px;
    background: #d0d0d0;
}
.tile {
    display: grid;
    grid-template-columns: 45px minmax(0, 1fr) 45px;
    align-items: center;
    justify-items: center;
    height: 65px;
    color: #9b9b9b;
    background: #dedede;
    text-align: center;
}
.tile b {
    padding: 2px 0 0 12px;
    font-size: 22px;
    font-weight: 600;
}
.tile span {
    white-space: nowrap;
}
.tile .circle, .tile svg {
    align-self: start;
    margin-top: 14px;
}
.tile .worksheet {
    margin: 18px 8px 0 0;
}
.tile .cart {
    justify-self: end;
    margin-right: 7px;
}
.tile.active {
    color: #1e1e1e;
}
.tile.active b {
    color: #d6752f;
}
h3 {
    margin: 19px 0 7px;
    font-size: 16px;
    line-height: 20px;
    color: #5c5c5c;
}
.eagleview {
    display: flex;
    justify-content: center;
    align-items: center;
    width: 50%;
    height: 57px;
    border: 1px solid #b5bcc2;
    background: #04324f;
    color: #dedede;
}
.ev-logo {
    display: flex;
    justify-content: center;
    align-items: center;
    width: 234px;
    height: 34px;
    background: #12304f;
}
.ev-name {
    font-size: 20px;
    font-weight: 600;
    line-height: 30px;
}
.ev-name b {
    font-size: 26px;
    font-weight: 600;
}

/* Activity feed */
.feed {
    min-width: 0;
    overflow: hidden;
}
.entry {
    display: flex;
    margin: 0 3px 0 6px;
    padding: 13px 0 14px;
    border-top: 1px solid #bdbdbd;
    color: #606060;
}
.entry.first {
    padding: 20px 0 19px;
    border-top: 0;
}
.who {
    flex: none;
    display: flex;
    flex-direction: column;
    align-items: center;
    width: 56px;
    margin-right: 9px;
    font-size: 11px;
    line-height: 17px;
    color: #1e1e1e;
}
.avatar {
    width: 38px;
    height: 38px;
    border: 1px solid #a5a5a5;
    border-radius: 50%;
    background: #c3c3c3;
    font-weight: 700;
    letter-spacing: 1px;
    line-height: 37px;
    text-align: center;
    color: #666;
}
.text {
    flex: 1;
    min-width: 0;
}
.text p {
    padding-right: 9px;
}
h4 {
    font-size: 13px;
    font-weight: 600;
}
h4 em {
    font-style: normal;
    color: #cc1414;
}
.job {
    display: block;
    font-weight: 600;
    color: #1a5fa5;
}
.more {
    display: flex;
    align-items: center;
    gap: 15px;
    width: 100%;
    height: 53px;
    padding-left: 55px;
    border: 1px solid #cacaca;
    border-width: 1px 0;
    font-family: Roboto, sans-serif;
    font-size: 16px;
    color: #1a5fa5;
}
.reply {
    display: flex;
    padding-top: 11px;
    color: #1e1e1e;
}
.reply h4 {
    font-weight: 700;
}

.chat {
    position: fixed;
    right: 12px;
    bottom: 11px;
    opacity: 0.85;
}
.bottom-shade {
    position: fixed;
    left: 21%;
    right: 21%;
    bottom: 0;
    height: 40px;
    border-bottom: 1px solid #8f8f8f;
    background: radial-gradient(ellipse at bottom, rgba(0, 0, 0, 0.08), transparent 70%);
    pointer-events: none;
}
```
